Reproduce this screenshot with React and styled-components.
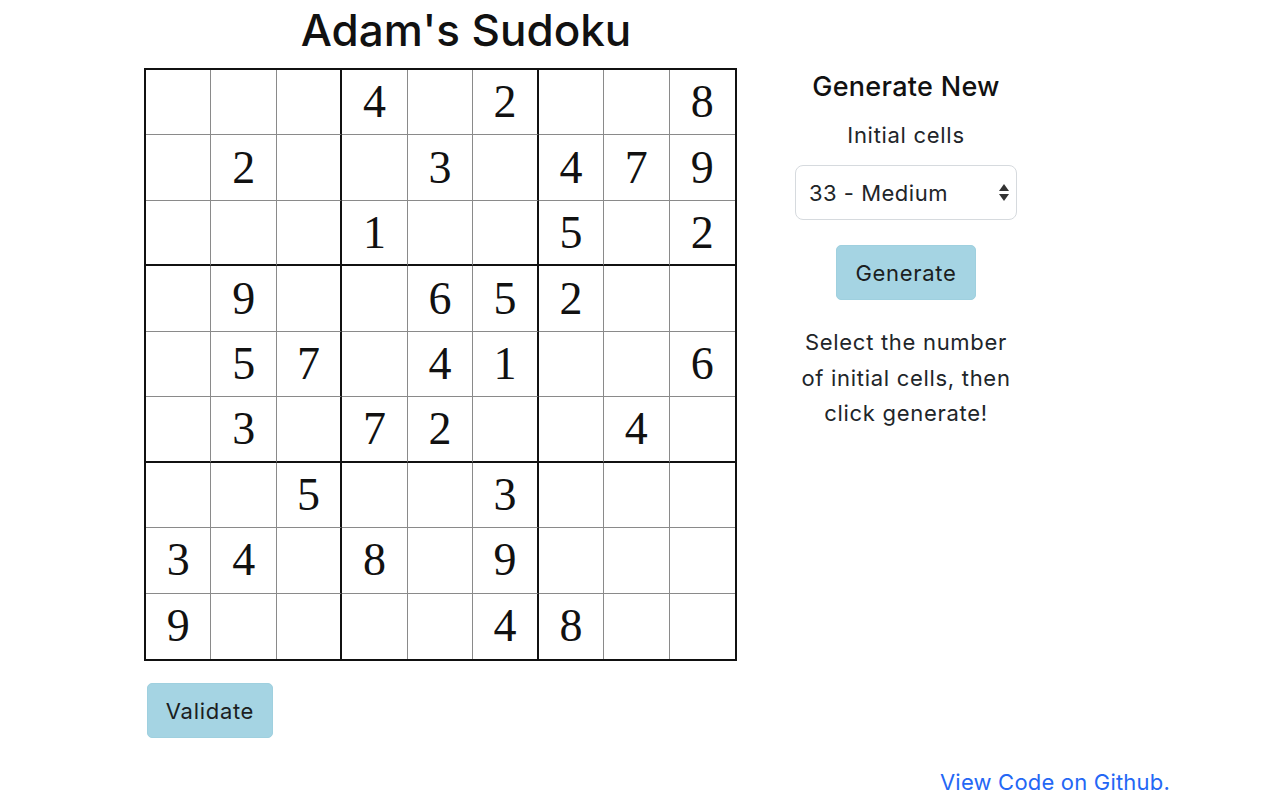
import React, { useState } from 'react';
import styled, { createGlobalStyle } from 'styled-components';

const GlobalStyle = createGlobalStyle`
  body {
    margin: 0;
    background: #fff;
    font-family: Inter, "Liberation Sans", sans-serif;
    color: #212529;
  }
`;

const puzzle = [
    '   4 2  8',
    ' 2  3 479',
    '   1  5 2',
    ' 9  652  ',
    ' 57 41  6',
    ' 3 72  4 ',
    '  5  3   ',
    '34 8 9   ',
    '9    48  ',
];

const Page = styled.div`
  display: flex;
  flex-direction: column;
  width: 1280px;
`;

const Main = styled.div`
  display: flex;
  align-items: flex-start;
  padding-left: 144px;
`;

const LeftColumn = styled.div`
  display: flex;
  flex-direction: column;
  width: 644px;
`;

const Title = styled.h1`
  margin: 3px 0 10px;
  font-size: 44px;
  font-weight: 500;
  line-height: 55px;
  text-align: center;
  color: #111;
`;

const Board = styled.div`
  display: grid;
  grid-template-columns: repeat(9, 1fr);
  grid-template-rows: repeat(9, 1fr);
  width: 593px;
  height: 593px;
  box-sizing: border-box;
  border: 2px solid #111;
`;

const Cell = styled.div`
  display: flex;
  align-items: center;
  justify-content: center;
  font-family: "Liberation Serif", "Times New Roman", serif;
  font-size: 46px;
  line-height: 1;
  color: #111;
  border-right: ${p => p.$col === 8 ? 'none' : p.$col % 3 === 2 ? '2px solid #111' : '1px solid #8a8a8a'};
  border-bottom: ${p => p.$row === 8 ? 'none' : p.$row % 3 === 2 ? '2px solid #111' : '1px solid #8a8a8a'};
`;

const Button = styled.button`
  font-family: Inter, "Liberation Sans", sans-serif;
  font-size: 22px;
  letter-spacing: 0.7px;
  color: #1b1e21;
  background: #a5d4e3;
  border: 1px solid #9fd0df;
  border-radius: 5px;
  height: 55px;
  padding: 0;
  cursor: pointer;
  width: ${p => p.$width}px;
`;

const ValidateRow = styled.div`
  display: flex;
  padding: 22px 0 0 3px;
`;

const Panel = styled.div`
  display: flex;
  flex-direction: column;
  align-items: center;
  width: 222px;
  margin-left: 7px;
  padding-top: 71px;
  text-align: center;
  font-size: 22px;
  letter-spacing: 0.7px;
`;

const PanelHeading = styled.h2`
  margin: 0 0 17px;
  font-size: 27px;
  font-weight: 500;
  line-height: 31px;
  letter-spacing: 0.3px;
  color: #111;
`;

const Label = styled.div`
  line-height: 33px;
  margin-bottom: 13px;
`;

const SelectWrap = styled.div`
  position: relative;
  width: 222px;
  margin-bottom: 25px;
`;

const Select = styled.select`
  appearance: none;
  -webkit-appearance: none;
  width: 100%;
  height: 55px;
  box-sizing: border-box;
  padding: 0 30px 0 13px;
  font-family: Inter, "Liberation Sans", sans-serif;
  font-size: 22px;
  letter-spacing: 0.5px;
  color: #212529;
  background: #fff;
  border: 1px solid #d6dade;
  border-radius: 8px;
`;

const Arrows = styled.svg`
  position: absolute;
  right: 8px;
  top: 19px;
  pointer-events: none;
`;

const Help = styled.p`
  margin: 25px 0 0;
  line-height: 35.5px;
`;

const Footer = styled.div`
  display: flex;
  justify-content: flex-end;
  padding: 28px 110px 0 0;
`;

const Link = styled.a`
  font-size: 22px;
  letter-spacing: 0.2px;
  line-height: 33px;
  color: #2467f5;
  text-decoration: none;
`;

export default function App() {
    const [cells, setCells] = useState('33');

    return (
        <Page>
            <GlobalStyle />
            <Main>
                <LeftColumn>
                    <Title>Adam's Sudoku</Title>
                    <Board>
                        {puzzle.map((line, r) =>
                            line.split('').map((ch, c) => (
                                <Cell key={`${r}-${c}`} $row={r} $col={c}>
                                    {ch.trim()}
                                </Cell>
                            ))
                        )}
                    </Board>
                    <ValidateRow>
                        <Button $width={126}>Validate</Button>
                    </ValidateRow>
                </LeftColumn>
                <Panel>
                    <PanelHeading>Generate New</PanelHeading>
                    <Label>Initial cells</Label>
                    <SelectWrap>
                        <Select value={cells} onChange={e => setCells(e.target.value)}>
                            <option value="25">25 - Hard</option>
                            <option value="33">33 - Medium</option>
                            <option value="40">40 - Easy</option>
                        </Select>
                        <Arrows width="10" height="17" viewBox="0 0 10 17">
                            <path d="M5 0 L10 7 L0 7 Z" fill="#333" />
                            <path d="M0 10 L10 10 L5 17 Z" fill="#333" />
                        </Arrows>
                    </SelectWrap>
                    <Button $width={140}>Generate</Button>
                    <Help>
                        Select the number<br />
                        of initial cells, then<br />
                        click generate!
                    </Help>
                </Panel>
            </Main>
            <Footer>
                <Link href="#">View Code on Github.</Link>
            </Footer>
        </Page>
    );
}
